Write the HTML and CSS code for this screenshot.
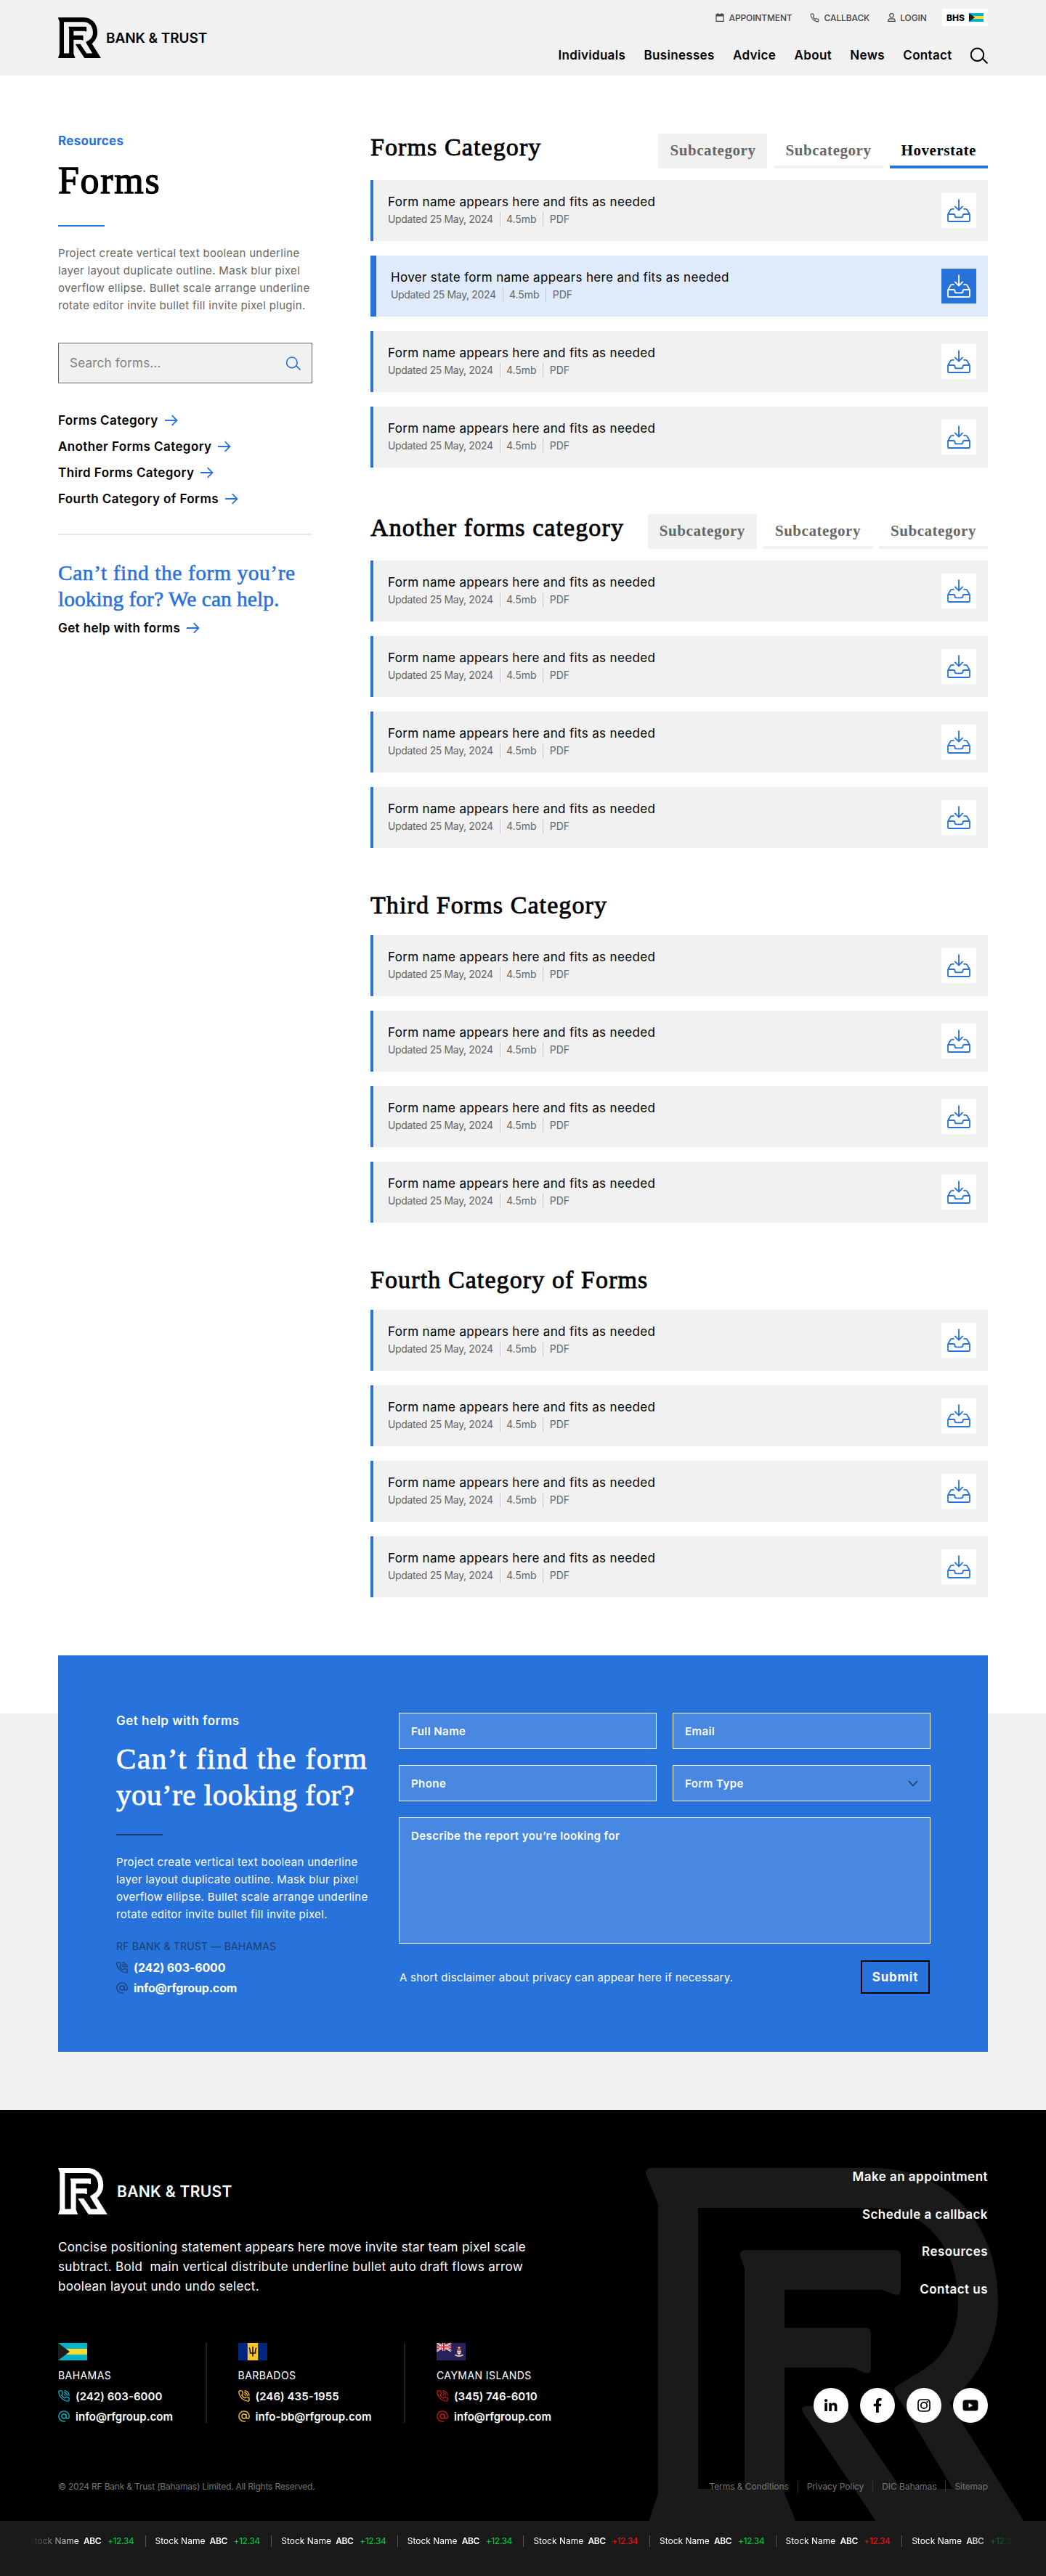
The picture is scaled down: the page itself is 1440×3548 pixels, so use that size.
FILE: index.html
```html
<!DOCTYPE html>
<html lang="en">
<head>
<meta charset="utf-8">
<title>Forms | RF Bank &amp; Trust</title>
<link rel="stylesheet" href="styles.css">
</head>
<body>
<svg class="sprite" aria-hidden="true">
  <symbol id="rf" viewBox="0 0 529 500"><path d="M8 0H313C417 0 485 78 485 185C485 245 455 290 418 323L529 500H326L216 336Q213 328 221 328H274L352 442H423L343 309Q341 303 346 300L385 276C415 255 430 225 430 185C430 110 385 55 313 55H72V442H136V139L130 122Q129 113 137 113H343Q351 113 351 121V167Q351 177 341 174L326 168H191V220H302Q310 220 310 228V275Q310 285 301 282L285 275H191V448L212 500H0L17 448V50L0 8Q0 0 8 0Z"/></symbol>
  <symbol id="arrow" viewBox="0 0 18 16"><path d="M0 8H16.5M9.7 1.2L16.5 8L9.7 14.8" fill="none" stroke="currentColor" stroke-width="1.8"/></symbol>
  <symbol id="search" viewBox="0 0 24 24"><path d="M18 9.7A8.7 8.7 0 1 1 .9 9.7A8.7 8.7 0 0 1 18 9.7ZM15.8 15.8L23.4 23.4" fill="none" stroke="currentColor" stroke-width="2"/></symbol>
  <symbol id="download" viewBox="0 0 32 32"><path d="M16 .5V15M10.3 9.8L16 15.4L21.7 9.8M9.6 13.9H6.4Q5.2 13.9 4.6 15L1.4 20.4Q1 21 1 22V29.8Q1 31 2.2 31H29.8Q31 31 31 29.8V22Q31 21 30.6 20.4L27.4 15Q26.8 13.9 25.6 13.9H22.4M1.2 21H9.2Q10.4 21 10.4 22.4Q10.4 25.4 13 25.4H19Q21.6 25.4 21.6 22.4Q21.6 21 22.8 21H30.8" fill="none" stroke="currentColor" stroke-width="1.8"/></symbol>
  <symbol id="phone" viewBox="0 0 24 24"><path d="M22 16.9v3a2 2 0 0 1-2.2 2 19.8 19.8 0 0 1-8.6-3.07 19.5 19.5 0 0 1-6-6A19.8 19.8 0 0 1 2.1 4.2 2 2 0 0 1 4.1 2h3a2 2 0 0 1 2 1.7c.1 1 .4 1.9.7 2.8a2 2 0 0 1-.45 2.1L8.1 9.9a16 16 0 0 0 6 6l1.3-1.3a2 2 0 0 1 2.1-.4c.9.3 1.8.6 2.8.7A2 2 0 0 1 22 16.9z" fill="none" stroke="currentColor" stroke-width="2"/></symbol>
  <symbol id="call" viewBox="0 0 24 24"><path d="M22.5 16.9v3.5a2 2 0 0 1-2.2 2.2C10.5 22.3 1.5 13.5 1.3 3.5A2 2 0 0 1 3.4 1.3h3.4a2 2 0 0 1 2 1.7l.7 3.8a2 2 0 0 1-.5 1.8L7.3 10.3a16 16 0 0 0 6.2 6.2l1.7-1.7a2 2 0 0 1 1.8-.5l3.8.7a2 2 0 0 1 1.7 1.9zM12.5 1.3A10.2 10.2 0 0 1 22.7 11.5M12.5 5.2A6.3 6.3 0 0 1 18.8 11.5M12.5 9A2.5 2.5 0 0 1 15 11.5" fill="none" stroke="currentColor" stroke-width="2"/></symbol>
  <symbol id="at" viewBox="0 0 24 24"><path d="M16.5 12A4.5 4.5 0 1 1 7.5 12A4.5 4.5 0 0 1 16.5 12ZM16.5 7.5V13.5a3.1 3.1 0 0 0 6.2 0V12A10.7 10.7 0 1 0 12 22.7H15" fill="none" stroke="currentColor" stroke-width="2.1"/></symbol>
  <symbol id="bhs" viewBox="0 0 40 24"><path fill="#00b5cc" d="M0 0H40V24H0z"/><path fill="#ffd92e" d="M0 8H40V16H0z"/><path fill="#1d1d1b" d="M0 0L16 12L0 24z"/></symbol>
</svg>

<header class="header">
  <a class="logo"><svg class="logo-mark"><use href="#rf"/></svg><span>BANK &amp; TRUST</span></a>
  <div class="header-right">
    <div class="utility">
      <a><svg width="12" height="12" viewBox="0 0 12 12"><path d="M1 1.8H11V11.3H1zM3.3 0V2M8.7 0V2" fill="none" stroke="currentColor" stroke-width="1.2"/><path d="M1 1.8H11V4.5H1z" fill="currentColor"/></svg>APPOINTMENT</a>
      <a><svg width="13" height="13"><use href="#phone"/></svg>CALLBACK</a>
      <a><svg width="11" height="12" viewBox="0 0 11 12"><path d="M8.2 3.3A2.7 2.7 0 1 1 2.8 3.3A2.7 2.7 0 0 1 8.2 3.3ZM.7 11.3Q1 7.8 2.8 7.8H8.2Q10 7.8 10.3 11.3z" fill="none" stroke="currentColor" stroke-width="1.2"/></svg>LOGIN</a>
      <a class="region"><b>BHS</b><svg width="20" height="12"><use href="#bhs"/></svg></a>
    </div>
    <nav class="nav">
      <a>Individuals</a><a>Businesses</a><a>Advice</a><a>About</a><a>News</a><a>Contact</a>
      <svg width="24" height="24"><use href="#search"/></svg>
    </nav>
  </div>
</header>

<main class="main">
  <aside class="side">
    <p class="eyebrow">Resources</p>
    <h1>Forms</h1>
    <div class="rule"></div>
    <p class="intro">Project create vertical text boolean underline<br>layer layout duplicate outline. Mask blur pixel<br>overflow ellipse. Bullet scale arrange underline<br>rotate editor invite bullet fill invite pixel plugin.</p>
    <div class="search"><span>Search forms...</span><svg width="20" height="20"><use href="#search"/></svg></div>
    <ul class="links">
      <li>Forms Category<svg><use href="#arrow"/></svg></li>
      <li>Another Forms Category<svg><use href="#arrow"/></svg></li>
      <li>Third Forms Category<svg><use href="#arrow"/></svg></li>
      <li>Fourth Category of Forms<svg><use href="#arrow"/></svg></li>
    </ul>
    <p class="pitch"><span>Can’t find the form you’re</span><br><span class="snug">looking for? We can help.</span></p>
    <p class="links help-link">Get help with forms<svg><use href="#arrow"/></svg></p>
  </aside>

  <div class="sections">
    <section>
      <div class="head tabbed"><h2>Forms Category</h2><div class="tabs"><a class="filled">Subcategory</a><a>Subcategory</a><a class="active">Hoverstate</a></div></div>
      <article class="card"><div><h3>Form name appears here and fits as needed</h3><p><span>Updated 25 May, 2024</span><span>4.5mb</span><span>PDF</span></p></div><a class="dl"><svg><use href="#download"/></svg></a></article>
      <article class="card hover"><div><h3>Hover state form name appears here and fits as needed</h3><p><span>Updated 25 May, 2024</span><span>4.5mb</span><span>PDF</span></p></div><a class="dl"><svg><use href="#download"/></svg></a></article>
      <article class="card"><div><h3>Form name appears here and fits as needed</h3><p><span>Updated 25 May, 2024</span><span>4.5mb</span><span>PDF</span></p></div><a class="dl"><svg><use href="#download"/></svg></a></article>
      <article class="card"><div><h3>Form name appears here and fits as needed</h3><p><span>Updated 25 May, 2024</span><span>4.5mb</span><span>PDF</span></p></div><a class="dl"><svg><use href="#download"/></svg></a></article>
    </section>
    <section>
      <div class="head tabbed"><h2>Another forms category</h2><div class="tabs"><a class="filled">Subcategory</a><a>Subcategory</a><a>Subcategory</a></div></div>
      <article class="card"><div><h3>Form name appears here and fits as needed</h3><p><span>Updated 25 May, 2024</span><span>4.5mb</span><span>PDF</span></p></div><a class="dl"><svg><use href="#download"/></svg></a></article>
      <article class="card"><div><h3>Form name appears here and fits as needed</h3><p><span>Updated 25 May, 2024</span><span>4.5mb</span><span>PDF</span></p></div><a class="dl"><svg><use href="#download"/></svg></a></article>
      <article class="card"><div><h3>Form name appears here and fits as needed</h3><p><span>Updated 25 May, 2024</span><span>4.5mb</span><span>PDF</span></p></div><a class="dl"><svg><use href="#download"/></svg></a></article>
      <article class="card"><div><h3>Form name appears here and fits as needed</h3><p><span>Updated 25 May, 2024</span><span>4.5mb</span><span>PDF</span></p></div><a class="dl"><svg><use href="#download"/></svg></a></article>
    </section>
    <section>
      <div class="head"><h2>Third Forms Category</h2></div>
      <article class="card"><div><h3>Form name appears here and fits as needed</h3><p><span>Updated 25 May, 2024</span><span>4.5mb</span><span>PDF</span></p></div><a class="dl"><svg><use href="#download"/></svg></a></article>
      <article class="card"><div><h3>Form name appears here and fits as needed</h3><p><span>Updated 25 May, 2024</span><span>4.5mb</span><span>PDF</span></p></div><a class="dl"><svg><use href="#download"/></svg></a></article>
      <article class="card"><div><h3>Form name appears here and fits as needed</h3><p><span>Updated 25 May, 2024</span><span>4.5mb</span><span>PDF</span></p></div><a class="dl"><svg><use href="#download"/></svg></a></article>
      <article class="card"><div><h3>Form name appears here and fits as needed</h3><p><span>Updated 25 May, 2024</span><span>4.5mb</span><span>PDF</span></p></div><a class="dl"><svg><use href="#download"/></svg></a></article>
    </section>
    <section>
      <div class="head"><h2>Fourth Category of Forms</h2></div>
      <article class="card"><div><h3>Form name appears here and fits as needed</h3><p><span>Updated 25 May, 2024</span><span>4.5mb</span><span>PDF</span></p></div><a class="dl"><svg><use href="#download"/></svg></a></article>
      <article class="card"><div><h3>Form name appears here and fits as needed</h3><p><span>Updated 25 May, 2024</span><span>4.5mb</span><span>PDF</span></p></div><a class="dl"><svg><use href="#download"/></svg></a></article>
      <article class="card"><div><h3>Form name appears here and fits as needed</h3><p><span>Updated 25 May, 2024</span><span>4.5mb</span><span>PDF</span></p></div><a class="dl"><svg><use href="#download"/></svg></a></article>
      <article class="card"><div><h3>Form name appears here and fits as needed</h3><p><span>Updated 25 May, 2024</span><span>4.5mb</span><span>PDF</span></p></div><a class="dl"><svg><use href="#download"/></svg></a></article>
    </section>
  </div>
</main>

<div class="help-band">
  <section class="help">
    <div class="help-copy">
      <p class="eyebrow">Get help with forms</p>
      <h2><span>Can’t find the form</span><br><span class="snug">you’re looking for?</span></h2>
      <div class="rule"></div>
      <p class="intro">Project create vertical text boolean underline<br>layer layout duplicate outline. Mask blur pixel<br>overflow ellipse. Bullet scale arrange underline<br>rotate editor invite bullet fill invite pixel.</p>
      <p class="branch">RF BANK &amp; TRUST — BAHAMAS</p>
      <p class="contact"><svg><use href="#call"/></svg>(242) 603-6000</p>
      <p class="contact"><svg><use href="#at"/></svg>info@rfgroup.com</p>
    </div>
    <form class="form">
      <div class="field">Full Name</div><div class="field">Email</div>
      <div class="field">Phone</div><div class="field select">Form Type<svg width="14" height="9" viewBox="0 0 14 9"><path d="M1 1L7 7.5L13 1" fill="none" stroke="currentColor" stroke-width="1.7"/></svg></div>
      <div class="field area">Describe the report you’re looking for</div>
      <div class="submit-row"><span>A short disclaimer about privacy can appear here if necessary.</span><a class="submit">Submit</a></div>
    </form>
  </section>
</div>

<footer class="footer">
  <svg class="watermark"><use href="#rf"/></svg>
  <div class="footer-top">
    <div>
      <a class="logo big"><svg class="logo-mark"><use href="#rf"/></svg><span>BANK &amp; TRUST</span></a>
      <p class="statement">Concise positioning statement appears here move invite star team pixel scale<br>subtract. Bold &nbsp;main vertical distribute underline bullet auto draft flows arrow<br>boolean layout undo undo select.</p>
      <div class="offices">
        <div class="office bahamas">
          <svg class="flag"><use href="#bhs"/></svg>
          <h4>BAHAMAS</h4>
          <p class="contact"><svg><use href="#call"/></svg>(242) 603-6000</p>
          <p class="contact"><svg><use href="#at"/></svg>info@rfgroup.com</p>
        </div>
        <div class="office barbados">
          <svg class="flag" viewBox="0 0 40 24"><path fill="#00267f" d="M0 0H40V24H0z"/><path fill="#ffc726" d="M12.8 0H27.2V24H12.8z"/><path d="M20 5V18.5M15 6.5Q16.5 8 16.5 14H23.5Q23.5 8 25 6.5" fill="none" stroke="#111" stroke-width="1.6"/></svg>
          <h4>BARBADOS</h4>
          <p class="contact"><svg><use href="#call"/></svg>(246) 435-1955</p>
          <p class="contact"><svg><use href="#at"/></svg>info-bb@rfgroup.com</p>
        </div>
        <div class="office cayman">
          <svg class="flag" viewBox="0 0 40 24"><path fill="#29235c" d="M0 0H40V24H0z"/><path d="M0 0L20 11M20 0L0 11" stroke="#fff" stroke-width="2.6"/><path d="M0 0L20 11M20 0L0 11" stroke="#e1232e" stroke-width=".9"/><path d="M10 0V11M0 5.5H20" stroke="#fff" stroke-width="3.6"/><path d="M10 0V11M0 5.5H20" stroke="#e1232e" stroke-width="2"/><circle cx="31" cy="7" r="1.9" fill="#c9a34a"/><path d="M28.3 9H33.7V13Q33.7 15 31 16.3Q28.3 15 28.3 13z" fill="#e8e3d8"/><path d="M28.3 9H33.7V11H28.3z" fill="#d5443c"/><path d="M28.7 13H33.3" stroke="#4779b8" stroke-width="1"/><path d="M25.5 16.5Q31 19.5 36.5 16.5" fill="none" stroke="#e6cf8a" stroke-width="1.8"/></svg>
          <h4>CAYMAN ISLANDS</h4>
          <p class="contact"><svg><use href="#call"/></svg>(345) 746-6010</p>
          <p class="contact"><svg><use href="#at"/></svg>info@rfgroup.com</p>
        </div>
      </div>
    </div>
    <div class="footer-right">
      <ul class="footer-links"><li>Make an appointment</li><li>Schedule a callback</li><li>Resources</li><li>Contact us</li></ul>
      <div class="social">
        <a><svg viewBox="0 0 20 20"><circle cx="3.1" cy="3.3" r="2.1"/><path d="M1.3 6.8H4.9V18H1.3zM7.3 6.8H10.7V8.3C11.5 7.1 12.7 6.5 14.2 6.5C17.2 6.5 18.4 8.4 18.4 11.3V18H14.8V12C14.8 10.5 14.3 9.5 13 9.5C11.6 9.5 10.9 10.5 10.9 12V18H7.3z"/></svg></a>
        <a><svg viewBox="0 0 20 20"><path d="M8 20V11.3H4.8V7.7H8V5.2C8 2 9.8.1 13 .1C14.3.1 15.6.3 15.6.3V3.4H13.9C12.3 3.4 11.8 4.4 11.8 5.4V7.7H15.4L14.8 11.3H11.8V20z"/></svg></a>
        <a><svg viewBox="0 0 20 20"><path d="M6.5 2H13.5Q18 2 18 6.5V13.5Q18 18 13.5 18H6.5Q2 18 2 13.5V6.5Q2 2 6.5 2ZM14.2 10A4.2 4.2 0 1 1 5.8 10A4.2 4.2 0 0 1 14.2 10Z" fill="none" stroke="#000" stroke-width="1.7"/><circle cx="14.7" cy="5.3" r="1.2"/></svg></a>
        <a><svg viewBox="0 0 22 20"><path fill-rule="evenodd" d="M4 2.5H18Q21.5 2.5 21.5 6V14Q21.5 17.5 18 17.5H4Q.5 17.5 .5 14V6Q.5 2.5 4 2.5ZM8.5 6.8V13.2L14.2 10z"/></svg></a>
      </div>
    </div>
  </div>
  <div class="legal"><span>© 2024 RF Bank &amp; Trust (Bahamas) Limited. All Rights Reserved.</span>
    <ul><li>Terms &amp; Conditions</li><li>Privacy Policy</li><li>DIC Bahamas</li><li>Sitemap</li></ul></div>
</footer>

<div class="ticker"><div class="track">
  <div class="stock"><span>Stock Name</span><b>ABC</b><i>+12.34</i></div>
  <div class="stock"><span>Stock Name</span><b>ABC</b><i>+12.34</i></div>
  <div class="stock"><span>Stock Name</span><b>ABC</b><i>+12.34</i></div>
  <div class="stock"><span>Stock Name</span><b>ABC</b><i>+12.34</i></div>
  <div class="stock down"><span>Stock Name</span><b>ABC</b><i>+12.34</i></div>
  <div class="stock"><span>Stock Name</span><b>ABC</b><i>+12.34</i></div>
  <div class="stock down"><span>Stock Name</span><b>ABC</b><i>+12.34</i></div>
  <div class="stock"><span>Stock Name</span><b>ABC</b><i>+12.34</i></div>
</div></div>
</body>
</html>
```
FILE: styles.css
```css
:root {
  --blue: #2872db;
  --grey: #f1f1f1;
  --text: #666;
  --serif: "Liberation Serif", serif;
}
* { box-sizing: border-box; margin: 0; padding: 0; }
body { width: 1440px; background: #fff; color: #000; font-family: Inter, sans-serif; white-space: nowrap; }
ul { list-style: none; }
svg { display: block; flex: none; }
.sprite { position: absolute; width: 0; height: 0; }

/* Header */
.header { display: flex; justify-content: space-between; height: 104px; padding: 12px 80px 0; background: var(--grey); }
.logo { display: flex; align-items: center; gap: 7px; height: 56px; margin-top: 12px; font-size: 19px; font-weight: 600; letter-spacing: -.08px; }
.logo-mark { width: 59px; height: 56px; }
.header-right { display: flex; flex-direction: column; align-items: flex-end; }
.utility { display: flex; align-items: center; height: 24px; color: #444; font-size: 12px; font-weight: 500; letter-spacing: -.12px; }
.utility a { display: flex; align-items: center; gap: 6.5px; margin-right: 24.5px; }
.utility .region { gap: 6px; height: 24px; margin: 0 0 0 -3px; padding: 0 6px; background: #fff; color: #000; letter-spacing: 0; }
.region b { font-weight: 800; }
.nav { display: flex; align-items: center; gap: 25.4px; height: 24px; margin-top: 28px; font-size: 17px; font-weight: 600; letter-spacing: .32px; }

/* Page body */
.main { display: flex; justify-content: space-between; padding: 80px 80px 0; height: 2176px; }
.side { width: 350px; }
.eyebrow { font-size: 17px; font-weight: 700; line-height: 20px; letter-spacing: .28px; color: var(--blue); }
h1 { margin-top: 15px; font: 400 52px/60px var(--serif); letter-spacing: 1.7px; -webkit-text-stroke: 1.3px #000; }
.rule { width: 64px; height: 2px; margin: 31px 0 25px; background: var(--blue); }
.intro { font-size: 15px; line-height: 24px; letter-spacing: .32px; color: var(--text); }
.search { display: flex; align-items: center; justify-content: space-between; height: 56px; margin: 39px 0 33px; padding: 0 15px; border: 1px solid var(--text); background: var(--grey); color: #808080; font-size: 17px; letter-spacing: .22px; }
.search svg { color: var(--blue); }
.links { font-size: 17px; font-weight: 600; line-height: 36px; letter-spacing: .41px; }
.links li, .help-link { display: flex; align-items: center; gap: 9px; height: 36px; }
.links svg { width: 18px; height: 16px; color: var(--blue); }
.pitch { margin: 30px 0 4px; padding-top: 35px; border-top: 2px solid #e8e8e8; color: var(--blue); font: 29.5px/35.5px var(--serif); letter-spacing: .55px; -webkit-text-stroke: .55px var(--blue); }
.pitch .snug { letter-spacing: 0; }

.sections { display: flex; flex-direction: column; gap: 64px; width: 850px; }
section { display: flex; flex-direction: column; gap: 20px; }
.head { display: flex; align-items: center; justify-content: space-between; height: 40px; margin-bottom: -4px; }
.head.tabbed { height: 48px; }
.head h2 { padding-bottom: 10px; font: 400 34px/36px var(--serif); letter-spacing: 1.1px; -webkit-text-stroke: .8px #000; }
.tabs { display: flex; gap: 9px; font: 700 21px/46px var(--serif); letter-spacing: .55px; color: var(--text); }
.tabs a { height: 48px; padding: 0 16px; border-bottom: 4px solid var(--grey); line-height: 46px; }
.tabs .filled { background: var(--grey); }
.tabs .active { border-color: var(--blue); color: #000; }
.card { display: flex; align-items: center; justify-content: space-between; height: 84px; padding: 0 16px 0 20px; border-left: 4px solid var(--blue); background: var(--grey); }
.card.hover { border-left-width: 8px; background: #dfeafb; }
.card h3 { font-size: 17px; font-weight: 400; line-height: 24px; letter-spacing: .34px; }
.card p { display: flex; height: 20px; margin: 2px 0 3px; color: var(--text); font-size: 14px; line-height: 20px; letter-spacing: -.36px; }
.card p span { padding-right: 9px; }
.card p span + span { padding-left: 8.5px; border-left: 1px solid #c6c8ca; letter-spacing: -.1px; }
.dl { display: grid; place-items: center; width: 48px; height: 48px; background: #fff; color: var(--blue); }
.dl svg { width: 32px; height: 32px; }
.hover .dl { background: var(--blue); color: #fff; }

/* Help form */
.help-band { height: 626px; padding: 0 80px; background: linear-gradient(#fff 80px, var(--grey) 80px); }
.help { display: flex; flex-direction: row; justify-content: space-between; gap: 0; height: 546px; padding: 80px; background: var(--blue); color: #fff; }
.help .eyebrow { color: #fff; font-weight: 600; letter-spacing: .48px; }
.help h2 { margin-top: 17px; font: 400 41px/50px var(--serif); letter-spacing: 1.55px; -webkit-text-stroke: .8px #fff; }
.help h2 .snug { letter-spacing: .5px; }
.help .rule { margin-top: 29px; background: #1a406f; }
.help .intro { color: #fff; }
.branch { margin: 22px 0 5px; color: #1a406f; font-size: 14px; line-height: 20px; letter-spacing: .19px; }
.contact { display: flex; align-items: center; gap: 8px; height: 28px; font-weight: 700; font-size: 16px; letter-spacing: -.14px; }
.contact svg { width: 16px; height: 16px; color: #1a406f; }
.form { display: grid; grid-template-columns: 355px 355px; grid-template-rows: 50px 50px 174px 46px; gap: 22px; margin: -1px -1px 0 0; }
.field { display: flex; align-items: center; justify-content: space-between; padding: 0 16px; border: 1px solid #fff; background: #4888e0; font-size: 15px; font-weight: 600; letter-spacing: .43px; }
.select svg { color: #1a406f; }
.area { grid-column: 1 / 3; align-items: flex-start; padding-top: 16px; line-height: 18px; }
.submit-row { grid-column: 1 / 3; display: flex; align-items: center; justify-content: space-between; margin: 1px 1px -1px; font-size: 15px; letter-spacing: .25px; }
.submit { width: 95px; height: 46px; border: 2px solid #000; font-size: 17px; font-weight: 700; line-height: 43px; text-align: center; letter-spacing: .75px; }

/* Footer */
.footer { position: relative; height: 566px; padding: 80px 80px 0; overflow: hidden; background: #000; color: #fff; }
.watermark { position: absolute; left: 889px; top: 80px; width: 529px; height: 500px; fill: #1a1a1a; }
.footer-top { position: relative; display: flex; justify-content: space-between; height: 351px; }
.logo.big { gap: 13px; height: 64px; margin: 0; font-size: 21px; letter-spacing: .32px; }
.big .logo-mark { width: 68px; height: 64px; fill: #fff; }
.statement { margin: 32px 0 64px; font-size: 17px; line-height: 27px; letter-spacing: .32px; }
.offices { display: flex; }
.office { height: 110px; padding-right: 44.5px; }
.office + .office { padding-left: 43px; border-left: 2px solid #1f1f1f; }
.office .flag { width: 40px; height: 24px; }
.office h4 { margin: 11px 0 4px; font-size: 14px; font-weight: 400; line-height: 20px; letter-spacing: .43px; }
.office .contact { font-size: 15px; font-weight: 600; letter-spacing: .05px; }
.bahamas .contact svg { color: #00b5cc; }
.barbados .contact svg { color: #ffc726; }
.cayman .contact svg { color: #c8171e; }
.footer-right { display: flex; flex-direction: column; justify-content: space-between; align-items: flex-end; }
.footer-links { display: flex; flex-direction: column; gap: 27.6px; text-align: right; font-size: 17px; font-weight: 600; line-height: 24px; letter-spacing: .47px; }
.social { display: flex; gap: 16px; }
.social a { display: grid; place-items: center; width: 48px; height: 48px; border-radius: 50%; background: #fff; }
.social svg { width: 22px; height: 20px; fill: #000; }
.legal { position: relative; display: flex; justify-content: space-between; margin-top: 80px; color: #777; font-size: 12px; line-height: 16px; letter-spacing: -.2px; }
.legal ul { display: flex; letter-spacing: -.07px; }
.legal li + li { margin-left: 12px; padding-left: 12px; border-left: 1px solid #333; }

/* Stock ticker */
.ticker { height: 76px; padding: 20px 40px 0; background: #1a1a1a; color: #fff; }
.track { display: flex; overflow: hidden; -webkit-mask-image: linear-gradient(90deg, transparent, #000 70px, #000 1290px, transparent); mask-image: linear-gradient(90deg, transparent, #000 70px, #000 1290px, transparent); }
.stock { display: flex; flex: none; width: 160.6px; height: 16px; margin-right: 13px; border-right: 1px solid #555; font-size: 12px; line-height: 16px; }
.stock span { width: 75px; }
.stock b { width: 33px; font-weight: 600; letter-spacing: -.4px; }
.stock i { font-style: normal; font-weight: 500; letter-spacing: -.5px; color: #00c13a; }
.stock.down i { color: #f00f0f; }
```
